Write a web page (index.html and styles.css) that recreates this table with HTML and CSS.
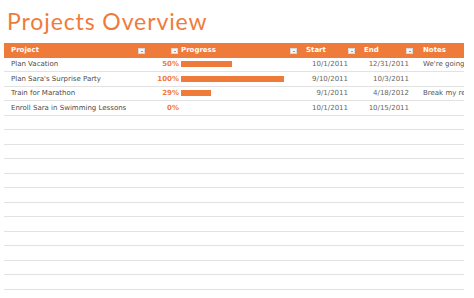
FILE: index.html
```html
<!DOCTYPE html>
<html>
<head>
<meta charset="utf-8">
<link rel="stylesheet" href="styles.css">
</head>
<body>
<h1 class="title">Projects Overview</h1>
<div class="table">
  <div class="row head">
    <div class="cell c-project">Project<span class="dd"></span></div>
    <div class="cell c-pct"><span class="dd"></span></div>
    <div class="cell c-prog">Progress<span class="dd"></span></div>
    <div class="cell c-start">Start<span class="dd"></span></div>
    <div class="cell c-end">End<span class="dd"></span></div>
    <div class="cell c-notes">Notes</div>
  </div>
  <div class="row">
    <div class="cell c-project">Plan Vacation</div>
    <div class="cell c-pct num">50%</div>
    <div class="cell c-prog"><div class="bar" style="width:51px"></div></div>
    <div class="cell c-start date">10/1/2011</div>
    <div class="cell c-end date">12/31/2011</div>
    <div class="cell c-notes">We're going to Hawaii</div>
  </div>
  <div class="row">
    <div class="cell c-project">Plan Sara's Surprise Party</div>
    <div class="cell c-pct num">100%</div>
    <div class="cell c-prog"><div class="bar" style="width:103px"></div></div>
    <div class="cell c-start date">9/10/2011</div>
    <div class="cell c-end date">10/3/2011</div>
    <div class="cell c-notes"></div>
  </div>
  <div class="row">
    <div class="cell c-project">Train for Marathon</div>
    <div class="cell c-pct num">29%</div>
    <div class="cell c-prog"><div class="bar" style="width:30px"></div></div>
    <div class="cell c-start date">9/1/2011</div>
    <div class="cell c-end date">4/18/2012</div>
    <div class="cell c-notes">Break my record</div>
  </div>
  <div class="row">
    <div class="cell c-project">Enroll Sara in Swimming Lessons</div>
    <div class="cell c-pct num">0%</div>
    <div class="cell c-prog"></div>
    <div class="cell c-start date">10/1/2011</div>
    <div class="cell c-end date">10/15/2011</div>
    <div class="cell c-notes"></div>
  </div>
  <div class="row empty"></div>
  <div class="row empty"></div>
  <div class="row empty"></div>
  <div class="row empty"></div>
  <div class="row empty"></div>
  <div class="row empty"></div>
  <div class="row empty"></div>
  <div class="row empty"></div>
  <div class="row empty"></div>
  <div class="row empty"></div>
  <div class="row empty"></div>
  <div class="row empty"></div>
</div>
</body>
</html>
```
FILE: styles.css
```css
html, body {
  margin: 0;
  padding: 0;
  background: #ffffff;
  overflow: hidden;
}
body {
  width: 474px;
  height: 298px;
  font-family: "DejaVu Sans", sans-serif;
}
.title {
  margin: 0;
  padding: 7px 0 0 7px;
  height: 37px;
  box-sizing: border-box;
  font-family: "Lato", sans-serif;
  font-weight: 400;
  font-size: 23px;
  line-height: 28px;
  letter-spacing: 0.9px;
  color: #ef7b3b;
}
.table {
  margin-left: 4px;
  width: 460px;
  margin-top: 6px;
}
.row {
  display: grid;
  grid-template-columns: 143px 33px 119px 58px 58px 49px;
  height: 14.5px;
  box-sizing: border-box;
  border-bottom: 1px solid #e2e2e2;
  font-size: 7px;
  color: #4a4a4a;
  align-items: center;
}
.row.head {
  background: #ef7b3b;
  color: #ffffff;
  font-weight: bold;
  border-bottom: none;
}
.cell {
  position: relative;
  height: 100%;
  display: flex;
  align-items: center;
  padding-left: 7px;
  white-space: nowrap;
  overflow: hidden;
  box-sizing: border-box;
}
.dd {
  position: absolute;
  right: 2px;
  top: 4.5px;
  width: 7px;
  height: 6px;
  background: #f4f4f4;
  border: 0.5px solid #d8d8d8;
  box-sizing: border-box;
}
.dd::after {
  content: "";
  position: absolute;
  left: 1.5px;
  top: 2px;
  border-left: 1.5px solid transparent;
  border-right: 1.5px solid transparent;
  border-top: 1.5px solid #444;
}
.num {
  justify-content: flex-end;
  padding-left: 0;
  padding-right: 1px;
  color: #f07c44;
  font-weight: bold;
}
.c-prog {
  padding-left: 1px;
}
.bar {
  height: 6px;
  background: #ef7b3b;
}
.date {
  justify-content: flex-end;
  padding-left: 0;
  color: #666666;
}
.c-start.date {
  padding-right: 9px;
}
.c-end.date {
  padding-right: 6px;
}
.c-notes {
  padding-left: 8px;
  color: #555555;
}
.row.head .c-notes {
  color: #ffffff;
}
```
